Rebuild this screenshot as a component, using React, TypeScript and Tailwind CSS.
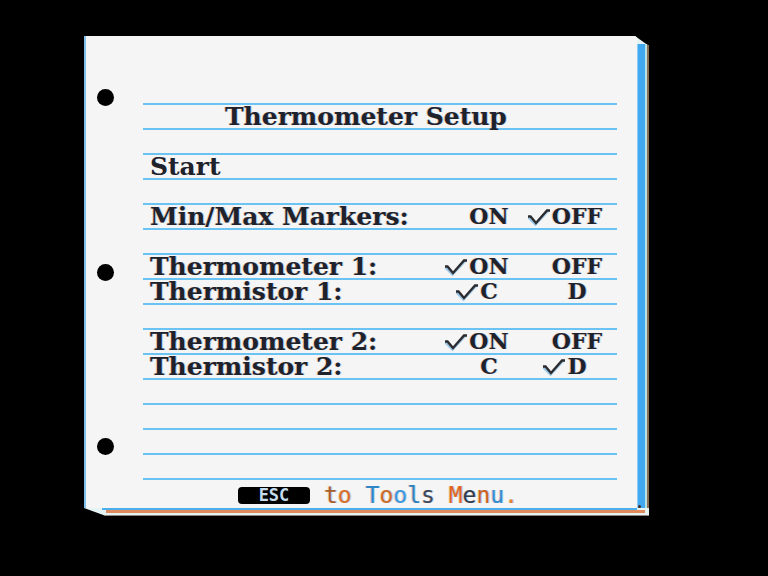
import React, { useState } from 'react';

interface Setting {
  id: string;
  label: string;
  options: [string, string];
}

// null is an empty ruled line
const settings: (Setting | null)[] = [
  { id: 'markers', label: 'Min/Max Markers:', options: ['ON', 'OFF'] },
  null,
  { id: 'thermometer1', label: 'Thermometer 1:', options: ['ON', 'OFF'] },
  { id: 'thermistor1', label: 'Thermistor 1:', options: ['C', 'D'] },
  null,
  { id: 'thermometer2', label: 'Thermometer 2:', options: ['ON', 'OFF'] },
  { id: 'thermistor2', label: 'Thermistor 2:', options: ['C', 'D'] },
  null,
  null,
  null,
  null,
];

const footerLetters: [string, string][] = [
  ['t', 'text-[#a8602c]'],
  ['o', 'text-[#d56f28]'],
  [' ', ''],
  ['T', 'text-[#2f86c6]'],
  ['o', 'text-[#c96a26]'],
  ['o', 'text-[#3a98de]'],
  ['l', 'text-[#2f80bb]'],
  ['s', 'text-[#3d4858]'],
  [' ', ''],
  ['M', 'text-[#e0641c]'],
  ['e', 'text-[#2f3b50]'],
  ['n', 'text-[#c96322]'],
  ['u', 'text-[#358cd0]'],
  ['.', 'text-[#e08030]'],
];

const Line: React.FC<{ children?: React.ReactNode }> = ({ children }) => (
  <div className="flex h-[25px] border-t-2 border-[#6bc3f4] pl-[7px]">{children}</div>
);

const Option: React.FC<{
  name: string;
  value: string;
  checked: boolean;
  onSelect: () => void;
}> = ({ name, value, checked, onSelect }) => (
  <label className="flex w-20 cursor-pointer items-center justify-center text-[22px]">
    <span className="-ml-6 grid h-5 w-6 shrink-0">
      <input
        type="radio"
        name={name}
        value={value}
        checked={checked}
        onChange={onSelect}
        className="col-start-1 row-start-1 appearance-none"
      />
      {checked && (
        <svg
          viewBox="0 0 24 20"
          className="pointer-events-none col-start-1 row-start-1 h-5 w-6"
          fill="none"
          aria-hidden="true"
        >
          <path d="M0 10 L7.5 17.5 L21 3" stroke="#3f93d2" strokeWidth="2.5" opacity="0.5" />
          <path d="M0 9.5 H2.5 L8 16 L19 3.5 H22" stroke="#2b2b30" strokeWidth="2.4" />
        </svg>
      )}
    </span>
    {value}
  </label>
);

const App: React.FC = () => {
  const [values, setValues] = useState<Record<string, string>>({
    markers: 'OFF',
    thermometer1: 'ON',
    thermistor1: 'C',
    thermometer2: 'ON',
    thermistor2: 'D',
  });

  return (
    <div className="min-h-screen bg-black pt-9 pr-[119px] pb-15 pl-[84px]">
      {/* Stack of paper, with the corners cut off */}
      <main className="bg-[#e6f3f5] [clip-path:polygon(0_0,calc(100%_-_14px)_0,100%_10px,100%_100%,22px_100%,0_calc(100%_-_8px))]">
        <div className="flex">
          <div className="flex flex-1 border-l-2 border-[#7fc1ea] bg-[#f5f5f5]">
            <div className="flex w-[57px] flex-col justify-between py-[53px] pl-[11px]">
              <span className="size-[17px] rounded-full bg-black" />
              <span className="size-[17px] rounded-full bg-black" />
              <span className="size-[17px] rounded-full bg-black" />
            </div>

            <div className="mr-5 flex-1 pt-[67px] font-['DejaVu_Serif','Liberation_Serif',serif] text-[25px] leading-[23px] font-bold whitespace-nowrap text-[#20222b] [text-shadow:-1px_0_rgba(226,120,50,0.3),1px_0_rgba(50,140,220,0.35)]">
              <Line>
                <h1 className="pl-[75px]">Thermometer Setup</h1>
              </Line>
              <Line />
              <Line>
                <button type="button" className="cursor-pointer">
                  Start
                </button>
              </Line>
              <Line />
              {settings.map((setting, i) => (
                <Line key={i}>
                  {setting && (
                    <div
                      role="radiogroup"
                      aria-labelledby={setting.id}
                      className="flex flex-1 gap-2"
                    >
                      <span id={setting.id} className="flex-1">
                        {setting.label}
                      </span>
                      {setting.options.map((option) => (
                        <Option
                          key={option}
                          name={setting.id}
                          value={option}
                          checked={values[setting.id] === option}
                          onSelect={() => setValues({ ...values, [setting.id]: option })}
                        />
                      ))}
                    </div>
                  )}
                </Line>
              ))}

              <div className="flex h-[30px] items-center justify-center gap-[14px] border-t-2 border-[#6bc3f4] pt-[2px] pr-1 font-['DejaVu_Sans_Mono','Liberation_Mono',monospace] text-[23px] font-normal">
                <button
                  type="button"
                  className="h-[17px] w-[72px] cursor-pointer rounded-[4px] bg-black text-[17px] leading-[17px] font-bold text-[#c4dcec]"
                >
                  ESC
                </button>
                <p className="whitespace-pre">
                  {footerLetters.map(([letter, color], i) => (
                    <span key={i} className={color}>
                      {letter}
                    </span>
                  ))}
                </p>
              </div>
            </div>
          </div>

          {/* Right edge of the stack */}
          <div className="mt-2 flex w-2 items-end border-l border-[#8ccdf5] bg-[#42a8f0]">
            <span className="size-[3px] rounded-full bg-[#4a2a1c]" />
          </div>
          <div className="mt-2 w-1 border-r-2 border-[#8a6f52] bg-[#b8e2e4]" />
        </div>

        {/* Bottom edge of the stack */}
        <div className="ml-[18px] mr-3 h-[2px] bg-[#4aaeea]" />
        <div className="ml-[22px] mr-1 h-[3px] bg-[#e08a60]" />
        <div className="h-[3px] border-b border-[#8c8680]" />
      </main>
    </div>
  );
};

export default App;
